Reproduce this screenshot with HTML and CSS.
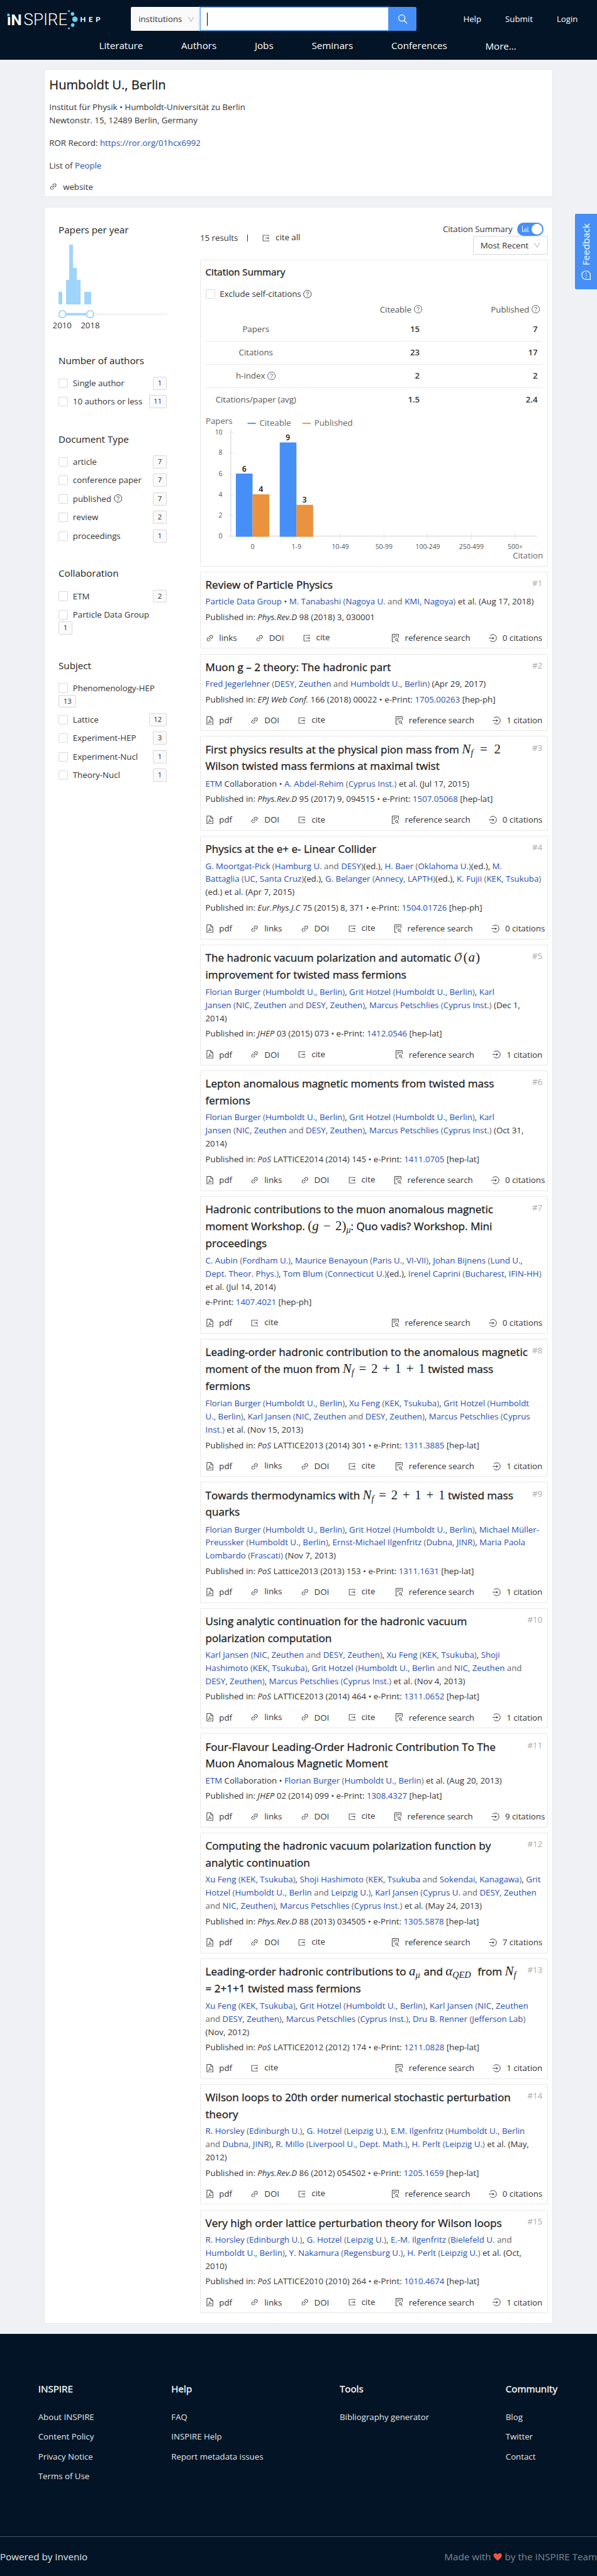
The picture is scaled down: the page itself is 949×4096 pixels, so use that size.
FILE: index.html
```html
<!DOCTYPE html>
<html lang="en">
<head>
<meta charset="utf-8">
<title>Humboldt U., Berlin - INSPIRE</title>
<link rel="stylesheet" href="styles.css">
</head>
<body>
<svg class="sprite" width="0" height="0">
  <symbol id="link" viewBox="0 0 1024 1024"><path fill="currentColor" d="M574 665.4a8.03 8.03 0 00-11.3 0L446.5 781.6c-53.8 53.8-144.6 59.5-204 0-59.5-59.5-53.8-150.2 0-204l116.2-116.2c3.1-3.1 3.1-8.2 0-11.3l-39.8-39.8a8.03 8.03 0 00-11.3 0L191.4 526.5c-84.6 84.6-84.6 221.5 0 306s221.5 84.6 306 0l116.2-116.2c3.1-3.1 3.1-8.2 0-11.3L574 665.4zm258.6-474c-84.6-84.6-221.5-84.6-306 0L410.3 307.6a8.03 8.03 0 000 11.3l39.7 39.7c3.1 3.1 8.2 3.1 11.3 0l116.2-116.2c53.8-53.8 144.6-59.5 204 0 59.5 59.5 53.8 150.2 0 204L665.3 562.6a8.03 8.03 0 000 11.3l39.8 39.8c3.1 3.1 8.2 3.1 11.3 0l116.2-116.2c84.5-84.6 84.5-221.5 0-306.1zM610.1 372.3a8.03 8.03 0 00-11.3 0L372.3 598.7a8.03 8.03 0 000 11.3l39.6 39.6c3.1 3.1 8.2 3.1 11.3 0l226.4-226.4c3.1-3.1 3.1-8.2 0-11.3l-39.5-39.6z"/></symbol>
  <symbol id="cite" viewBox="0 0 1024 1024"><path fill="currentColor" d="M888.3 757.4h-53.8c-4.2 0-7.7 3.5-7.7 7.7v61.8H197.1V197.1h629.8v61.8c0 4.2 3.5 7.7 7.7 7.7h53.8c4.2 0 7.7-3.4 7.7-7.7V158.7c0-17-13.7-30.7-30.7-30.7H158.7c-17 0-30.7 13.7-30.7 30.7v706.6c0 17 13.7 30.7 30.7 30.7h706.6c17 0 30.7-13.7 30.7-30.7V765.1c0-4.3-3.5-7.7-7.7-7.7zm18.6-251.7L765 393.7c-5.3-4.2-13-.4-13 6.3v76H438c-4.4 0-8 3.6-8 8v56c0 4.4 3.6 8 8 8h314v76c0 6.7 7.8 10.5 13 6.3l141.9-112a8 8 0 000-12.6z"/></symbol>
  <symbol id="pdf" viewBox="0 0 14 14"><path fill="none" stroke="currentColor" d="M2 .5h6.6L12 4v9.500H2zM8.400.700V4.200H11.800"/><path fill="none" stroke="currentColor" stroke-width=".8" d="M6.300 5.600c1 2.200 1.500 3.400 3.600 4.200-2-.5-4.200.2-6 1.400 2-1.300 2.900-3.600 2.400-5.600z"/></symbol>
  <symbol id="refs" viewBox="0 0 14 14"><path fill="none" stroke="currentColor" d="M5.500 13.400H1.500V.600H12V6.500M3.500 3.500H10M3.500 6H6.500"/><circle cx="9" cy="9.600" r="2" fill="none" stroke="currentColor"/><path stroke="currentColor" d="M10.400 11l2 2.400"/></symbol>
  <symbol id="cited" viewBox="0 0 14 14"><path fill="none" stroke="currentColor" d="M2.200 3.200a6 6 0 1 1 0 7.600"/><path fill="none" stroke="currentColor" d="M0 7H7"/><path fill="currentColor" d="M6.500 4.900L9.200 7 6.500 9.100z"/></symbol>
  <symbol id="help" viewBox="0 0 14 14"><circle cx="7" cy="7" r="6.400" fill="none" stroke="currentColor"/><path fill="none" stroke="currentColor" d="M5 5.600c0-2.500 4-2.500 4 0C9 7 7 6.900 7 8.500"/><circle cx="7" cy="10.200" r=".65" fill="currentColor"/></symbol>
  <symbol id="down" viewBox="0 0 12 12"><path fill="none" stroke="#b8b8b8" stroke-width="1.100" d="M1.500 2L6 9.500 10.500 2"/></symbol>
</svg>
<div class="page">
<header class="header">
  <div class="top">
    <svg class="logo" viewBox="0 0 180 64" width="180" height="64">
      <g fill="#fff">
        <text x="11.500" y="42.600" class="lg-b" textLength="25" lengthAdjust="spacingAndGlyphs">ıN</text>
        <text x="39.500" y="42.600" class="lg-l" textLength="73.500" lengthAdjust="spacingAndGlyphs">SPIRE</text>
        <text x="134" y="37" class="lg-h" textLength="34">HEP</text>
      </g>
      <g fill="#5fd0fa"><circle cx="14.200" cy="25" r="2.300"/><circle cx="115.500" cy="18.500" r="1.600"/><circle cx="121.500" cy="23.300" r="3"/><circle cx="125.500" cy="32.300" r="4.600"/><circle cx="121.800" cy="42" r="3"/><circle cx="115.500" cy="47.500" r="1.600"/></g>
    </svg>
    <div class="search">
      <div class="scope">institutions<svg width="12" height="12"><use href="#down"/></svg></div>
      <div class="field"><span class="caret"></span></div>
      <div class="go"><svg width="17" height="17" viewBox="0 0 17 17"><circle cx="7" cy="7" r="5.300" fill="none" stroke="#fff" stroke-width="1.300"/><path d="M11 11l4.800 5" stroke="#fff" stroke-width="1.500"/></svg></div>
    </div>
    <nav class="user"><span>Help</span><span>Submit</span><span>Login</span></nav>
  </div>
  <nav class="nav"><span>Literature</span><span>Authors</span><span>Jobs</span><span>Seminars</span><span>Conferences</span><span class="more">More...</span></nav>
</header>

<section class="panel inst">
  <h1>Humboldt U., Berlin</h1>
  <p class="addr">Institut für Physik • Humboldt-Universität zu Berlin<br>Newtonstr. 15, 12489 Berlin, Germany</p>
  <p>ROR Record: <a>https://ror.org/01hcx6992</a></p>
  <p>List of <a>People</a></p>
  <div class="act web"><svg><use href="#link"/></svg>website</div>
</section>

<section class="panel results">
  <aside class="side">
    <h3>Papers per year</h3>
    <div class="hist"><i style="height:21px"></i><i style="height:0"></i><i style="height:41px"></i><i style="height:100px"></i><i style="height:61px"></i><i style="height:41px"></i><i style="height:0"></i><i style="height:21px"></i><i style="height:21px"></i></div>
    <svg class="slider" width="184" height="16" viewBox="0 0 184 16"><rect y="6" width="183" height="4" rx="2" fill="#f5f5f5"/><rect x="6" y="6" width="47" height="4" fill="#9fd4fb"/><g fill="#fff" stroke="#9fd4fb" stroke-width="2"><circle cx="6.500" cy="8" r="6"/><circle cx="53" cy="8" r="6"/></g></svg>
    <div class="years"><span>2010</span><span>2018</span></div>
    <h3 class="first">Number of authors</h3>
    <div class="row"><i></i><span>Single author</span><b>1</b></div>
    <div class="row"><i></i><span>10 authors or less</span><b>11</b></div>
    <h3>Document Type</h3>
    <div class="row"><i></i><span>article</span><b>7</b></div>
    <div class="row"><i></i><span>conference paper</span><b>7</b></div>
    <div class="row"><i></i><span>published<svg class="q"><use href="#help"/></svg></span><b>7</b></div>
    <div class="row"><i></i><span>review</span><b>2</b></div>
    <div class="row"><i></i><span>proceedings</span><b>1</b></div>
    <h3>Collaboration</h3>
    <div class="row"><i></i><span>ETM</span><b>2</b></div>
    <div class="row long"><i></i><span>Particle Data Group</span><b>1</b></div>
    <h3>Subject</h3>
    <div class="row long"><i></i><span>Phenomenology-HEP</span><b>13</b></div>
    <div class="row"><i></i><span>Lattice</span><b>12</b></div>
    <div class="row"><i></i><span>Experiment-HEP</span><b>3</b></div>
    <div class="row"><i></i><span>Experiment-Nucl</span><b>1</b></div>
    <div class="row"><i></i><span>Theory-Nucl</span><b>1</b></div>
  </aside>

  <main class="main">
    <div class="bar">
      <div class="count"><span>15 results</span><em></em><div class="act"><svg><use href="#cite"/></svg><span class="up">cite all</span></div></div>
      <div class="opts">
        <div class="toggle">Citation Summary<span class="switch"><svg width="12" height="11" viewBox="0 0 12 11"><path fill="none" stroke="#fff" d="M.5 0V9.500H12M3.500 5.500V8M5.500 3.500V8M7.500 5V8M9.500 1.500V8"/></svg><i></i></span></div>
        <div class="sort">Most Recent<svg width="12" height="12"><use href="#down"/></svg></div>
      </div>
    </div>

    <article class="summary">
      <h2>Citation Summary</h2>
      <div class="row excl"><i></i><span>Exclude self-citations<svg class="q"><use href="#help"/></svg></span></div>
      <div class="tbl">
        <div class="tr th"><span></span><span>Citeable<svg class="q"><use href="#help"/></svg></span><span>Published<svg class="q"><use href="#help"/></svg></span></div>
        <div class="tr"><span>Papers</span><b>15</b><b>7</b></div>
        <div class="tr"><span>Citations</span><b>23</b><b>17</b></div>
        <div class="tr"><span>h-index<svg class="q"><use href="#help"/></svg></span><b>2</b><b>2</b></div>
        <div class="tr"><span>Citations/paper (avg)</span><b>1.5</b><b>2.4</b></div>
      </div>
      <svg class="chart" width="565" height="250" viewBox="344 694 565 250">
        <g class="c14"><text x="344" y="711">Papers</text><text x="434" y="714">Citeable</text><text x="526" y="714">Published</text><text x="909" y="936" text-anchor="end">Citation</text></g>
        <path stroke="#468ff7" stroke-width="2" d="M414 710h14"/><path stroke="#ea923d" stroke-width="2" d="M506 710h14"/>
        <path stroke="#e6e6e9" stroke-width="2" fill="none" d="M386 719V899"/>
        <path stroke="#e6e6e9" fill="none" d="M381 725h11M381 759.800h11M381 794.600h11M381 829.400h11M381 864.200h11M422.500 893v12M496 893v12M569.500 893v12M642.500 893v12M715.500 893v12M789 893v12M862.500 893v12"/>
        <path stroke="#e6e6e6" stroke-width="2" d="M381 899H899"/>
        <path fill="#468ff7" d="M394.500 794h28v106h-28zM468 742h28v158h-28z"/><path fill="#ea923d" d="M422.500 829h28v71h-28zM496 846.500h28v53.500h-28z"/>
        <g class="c11" text-anchor="end"><text x="372" y="729">10</text><text x="372" y="763">8</text><text x="372" y="798">6</text><text x="372" y="833">4</text><text x="372" y="868">2</text><text x="372" y="903">0</text></g>
        <g class="c11" text-anchor="middle"><text x="422.500" y="921">0</text><text x="496" y="921">1-9</text><text x="569.500" y="921">10-49</text><text x="642.500" y="921">50-99</text><text x="716" y="921">100-249</text><text x="789" y="921">250-499</text><text x="862.500" y="921">500+</text></g>
        <g class="cb" text-anchor="middle"><text x="408.500" y="791">6</text><text x="436.500" y="825">4</text><text x="481.500" y="738">9</text><text x="509.500" y="843">3</text></g>
      </svg>
    </article>

    <article class="paper"><div class="hd"><h2>Review of Particle Physics</h2><span>#1</span></div>
      <p class="au"><a>Particle Data Group</a> • <a>M. Tanabashi</a> <span>(<a>Nagoya U.</a> and <a>KMI, Nagoya</a>)</span> et al. (Aug 17, 2018)</p>
      <p class="pub">Published in: <em>Phys.Rev.D</em> 98 (2018) 3, 030001</p>
      <div class="acts"><div class="act"><svg><use href="#link"/></svg>links</div><div class="act"><svg><use href="#link"/></svg>DOI</div><div class="act"><svg><use href="#cite"/></svg><span class="up">cite</span></div><div class="act r"><svg><use href="#refs"/></svg>reference search</div><div class="act"><svg><use href="#cited"/></svg>0 citations</div></div></article>

    <article class="paper"><div class="hd"><h2>Muon g – 2 theory: The hadronic part</h2><span>#2</span></div>
      <p class="au"><a>Fred Jegerlehner</a> <span>(<a>DESY, Zeuthen</a> and <a>Humboldt U., Berlin</a>)</span> (Apr 29, 2017)</p>
      <p class="pub">Published in: <em>EPJ Web Conf.</em> 166 (2018) 00022 • e-Print: <a>1705.00263</a> [hep-ph]</p>
      <div class="acts"><div class="act"><svg><use href="#pdf"/></svg>pdf</div><div class="act"><svg><use href="#link"/></svg>DOI</div><div class="act"><svg><use href="#cite"/></svg><span class="up">cite</span></div><div class="act r"><svg><use href="#refs"/></svg>reference search</div><div class="act"><svg><use href="#cited"/></svg>1 citation</div></div></article>

    <article class="paper tex"><div class="hd"><h2>First physics results at the physical pion mass from <span class="m w65"><span><i>N</i><sub>f</sub></span><span>=</span><span>2</span></span><br>Wilson twisted mass fermions at maximal twist</h2><span>#3</span></div>
      <p class="au"><a>ETM</a> Collaboration • <a>A. Abdel-Rehim</a> <span>(<a>Cyprus Inst.</a>)</span> et al. (Jul 17, 2015)</p>
      <p class="pub">Published in: <em>Phys.Rev.D</em> 95 (2017) 9, 094515 • e-Print: <a>1507.05068</a> [hep-lat]</p>
      <div class="acts"><div class="act"><svg><use href="#pdf"/></svg>pdf</div><div class="act"><svg><use href="#link"/></svg>DOI</div><div class="act"><svg><use href="#cite"/></svg><span class="up">cite</span></div><div class="act r"><svg><use href="#refs"/></svg>reference search</div><div class="act"><svg><use href="#cited"/></svg>0 citations</div></div></article>

    <article class="paper"><div class="hd"><h2>Physics at the e+ e- Linear Collider</h2><span>#4</span></div>
      <p class="au"><a>G. Moortgat-Pick</a> <span>(<a>Hamburg U.</a> and <a>DESY</a>)</span>(ed.), <a>H. Baer</a> <span>(<a>Oklahoma U.</a>)</span>(ed.), <a>M.<br>Battaglia</a> <span>(<a>UC, Santa Cruz</a>)</span>(ed.), <a>G. Belanger</a> <span>(<a>Annecy, LAPTH</a>)</span>(ed.), <a>K. Fujii</a> <span>(<a>KEK, Tsukuba</a>)</span><br>(ed.) et al. (Apr 7, 2015)</p>
      <p class="pub">Published in: <em>Eur.Phys.J.C</em> 75 (2015) 8, 371 • e-Print: <a>1504.01726</a> [hep-ph]</p>
      <div class="acts"><div class="act"><svg><use href="#pdf"/></svg>pdf</div><div class="act"><svg><use href="#link"/></svg>links</div><div class="act"><svg><use href="#link"/></svg>DOI</div><div class="act"><svg><use href="#cite"/></svg><span class="up">cite</span></div><div class="act r"><svg><use href="#refs"/></svg>reference search</div><div class="act"><svg><use href="#cited"/></svg>0 citations</div></div></article>

    <article class="paper tex"><div class="hd"><h2>The hadronic vacuum polarization and automatic <span class="m w44"><span class="cal">𝒪</span><span>(</span><i>a</i><span>)</span></span><br>improvement for twisted mass fermions</h2><span>#5</span></div>
      <p class="au"><a>Florian Burger</a> <span>(<a>Humboldt U., Berlin</a>)</span>, <a>Grit Hotzel</a> <span>(<a>Humboldt U., Berlin</a>)</span>, <a>Karl<br>Jansen</a> <span>(<a>NIC, Zeuthen</a> and <a>DESY, Zeuthen</a>)</span>, <a>Marcus Petschlies</a> <span>(<a>Cyprus Inst.</a>)</span> (Dec 1,<br>2014)</p>
      <p class="pub">Published in: <em>JHEP</em> 03 (2015) 073 • e-Print: <a>1412.0546</a> [hep-lat]</p>
      <div class="acts"><div class="act"><svg><use href="#pdf"/></svg>pdf</div><div class="act"><svg><use href="#link"/></svg>DOI</div><div class="act"><svg><use href="#cite"/></svg><span class="up">cite</span></div><div class="act r"><svg><use href="#refs"/></svg>reference search</div><div class="act"><svg><use href="#cited"/></svg>1 citation</div></div></article>

    <article class="paper"><div class="hd"><h2>Lepton anomalous magnetic moments from twisted mass<br>fermions</h2><span>#6</span></div>
      <p class="au"><a>Florian Burger</a> <span>(<a>Humboldt U., Berlin</a>)</span>, <a>Grit Hotzel</a> <span>(<a>Humboldt U., Berlin</a>)</span>, <a>Karl<br>Jansen</a> <span>(<a>NIC, Zeuthen</a> and <a>DESY, Zeuthen</a>)</span>, <a>Marcus Petschlies</a> <span>(<a>Cyprus Inst.</a>)</span> (Oct 31,<br>2014)</p>
      <p class="pub">Published in: <em>PoS</em> LATTICE2014 (2014) 145 • e-Print: <a>1411.0705</a> [hep-lat]</p>
      <div class="acts"><div class="act"><svg><use href="#pdf"/></svg>pdf</div><div class="act"><svg><use href="#link"/></svg>links</div><div class="act"><svg><use href="#link"/></svg>DOI</div><div class="act"><svg><use href="#cite"/></svg><span class="up">cite</span></div><div class="act r"><svg><use href="#refs"/></svg>reference search</div><div class="act"><svg><use href="#cited"/></svg>0 citations</div></div></article>

    <article class="paper tex"><div class="hd"><h2>Hadronic contributions to the muon anomalous magnetic<br>moment Workshop. <span class="m w72"><span>(<i>g</i></span><span>−</span><span>2)<sub>μ</sub></span></span>: Quo vadis? Workshop. Mini<br>proceedings</h2><span>#7</span></div>
      <p class="au"><a>C. Aubin</a> <span>(<a>Fordham U.</a>)</span>, <a>Maurice Benayoun</a> <span>(<a>Paris U., VI-VII</a>)</span>, <a>Johan Bijnens</a> <span>(<a>Lund U.,<br>Dept. Theor. Phys.</a>)</span>, <a>Tom Blum</a> <span>(<a>Connecticut U.</a>)</span>(ed.), <a>Irenel Caprini</a> <span>(<a>Bucharest, IFIN-HH</a>)</span><br>et al. (Jul 14, 2014)</p>
      <p class="pub">e-Print: <a>1407.4021</a> [hep-ph]</p>
      <div class="acts"><div class="act"><svg><use href="#pdf"/></svg>pdf</div><div class="act"><svg><use href="#cite"/></svg><span class="up">cite</span></div><div class="act r"><svg><use href="#refs"/></svg>reference search</div><div class="act"><svg><use href="#cited"/></svg>0 citations</div></div></article>

    <article class="paper tex"><div class="hd"><h2>Leading-order hadronic contribution to the anomalous magnetic<br>moment of the muon from <span class="m w138"><span><i>N</i><sub>f</sub></span><span>=</span><span>2</span><span>+</span><span>1</span><span>+</span><span>1</span></span> twisted mass<br>fermions</h2><span>#8</span></div>
      <p class="au"><a>Florian Burger</a> <span>(<a>Humboldt U., Berlin</a>)</span>, <a>Xu Feng</a> <span>(<a>KEK, Tsukuba</a>)</span>, <a>Grit Hotzel</a> <span>(<a>Humboldt<br>U., Berlin</a>)</span>, <a>Karl Jansen</a> <span>(<a>NIC, Zeuthen</a> and <a>DESY, Zeuthen</a>)</span>, <a>Marcus Petschlies</a> <span>(<a>Cyprus<br>Inst.</a>)</span> et al. (Nov 15, 2013)</p>
      <p class="pub">Published in: <em>PoS</em> LATTICE2013 (2014) 301 • e-Print: <a>1311.3885</a> [hep-lat]</p>
      <div class="acts"><div class="act"><svg><use href="#pdf"/></svg>pdf</div><div class="act"><svg><use href="#link"/></svg><span class="up">links</span></div><div class="act"><svg><use href="#link"/></svg>DOI</div><div class="act"><svg><use href="#cite"/></svg><span class="up">cite</span></div><div class="act r"><svg><use href="#refs"/></svg>reference search</div><div class="act"><svg><use href="#cited"/></svg>1 citation</div></div></article>

    <article class="paper tex"><div class="hd"><h2>Towards thermodynamics with <span class="m w138"><span><i>N</i><sub>f</sub></span><span>=</span><span>2</span><span>+</span><span>1</span><span>+</span><span>1</span></span> twisted mass<br>quarks</h2><span>#9</span></div>
      <p class="au"><a>Florian Burger</a> <span>(<a>Humboldt U., Berlin</a>)</span>, <a>Grit Hotzel</a> <span>(<a>Humboldt U., Berlin</a>)</span>, <a>Michael Müller-<br>Preussker</a> <span>(<a>Humboldt U., Berlin</a>)</span>, <a>Ernst-Michael Ilgenfritz</a> <span>(<a>Dubna, JINR</a>)</span>, <a>Maria Paola<br>Lombardo</a> <span>(<a>Frascati</a>)</span> (Nov 7, 2013)</p>
      <p class="pub">Published in: <em>PoS</em> Lattice2013 (2013) 153 • e-Print: <a>1311.1631</a> [hep-lat]</p>
      <div class="acts"><div class="act"><svg><use href="#pdf"/></svg>pdf</div><div class="act"><svg><use href="#link"/></svg><span class="up">links</span></div><div class="act"><svg><use href="#link"/></svg>DOI</div><div class="act"><svg><use href="#cite"/></svg><span class="up">cite</span></div><div class="act r"><svg><use href="#refs"/></svg>reference search</div><div class="act"><svg><use href="#cited"/></svg>1 citation</div></div></article>

    <article class="paper"><div class="hd"><h2>Using analytic continuation for the hadronic vacuum<br>polarization computation</h2><span>#10</span></div>
      <p class="au"><a>Karl Jansen</a> <span>(<a>NIC, Zeuthen</a> and <a>DESY, Zeuthen</a>)</span>, <a>Xu Feng</a> <span>(<a>KEK, Tsukuba</a>)</span>, <a>Shoji<br>Hashimoto</a> <span>(<a>KEK, Tsukuba</a>)</span>, <a>Grit Hotzel</a> <span>(<a>Humboldt U., Berlin</a> and <a>NIC, Zeuthen</a> and<br><a>DESY, Zeuthen</a>)</span>, <a>Marcus Petschlies</a> <span>(<a>Cyprus Inst.</a>)</span> et al. (Nov 4, 2013)</p>
      <p class="pub">Published in: <em>PoS</em> LATTICE2013 (2014) 464 • e-Print: <a>1311.0652</a> [hep-lat]</p>
      <div class="acts"><div class="act"><svg><use href="#pdf"/></svg>pdf</div><div class="act"><svg><use href="#link"/></svg><span class="up">links</span></div><div class="act"><svg><use href="#link"/></svg>DOI</div><div class="act"><svg><use href="#cite"/></svg><span class="up">cite</span></div><div class="act r"><svg><use href="#refs"/></svg>reference search</div><div class="act"><svg><use href="#cited"/></svg>1 citation</div></div></article>

    <article class="paper"><div class="hd"><h2>Four-Flavour Leading-Order Hadronic Contribution To The<br>Muon Anomalous Magnetic Moment</h2><span>#11</span></div>
      <p class="au"><a>ETM</a> Collaboration • <a>Florian Burger</a> <span>(<a>Humboldt U., Berlin</a>)</span> et al. (Aug 20, 2013)</p>
      <p class="pub">Published in: <em>JHEP</em> 02 (2014) 099 • e-Print: <a>1308.4327</a> [hep-lat]</p>
      <div class="acts"><div class="act"><svg><use href="#pdf"/></svg>pdf</div><div class="act"><svg><use href="#link"/></svg>links</div><div class="act"><svg><use href="#link"/></svg>DOI</div><div class="act"><svg><use href="#cite"/></svg><span class="up">cite</span></div><div class="act r"><svg><use href="#refs"/></svg>reference search</div><div class="act"><svg><use href="#cited"/></svg>9 citations</div></div></article>

    <article class="paper"><div class="hd"><h2>Computing the hadronic vacuum polarization function by<br>analytic continuation</h2><span>#12</span></div>
      <p class="au"><a>Xu Feng</a> <span>(<a>KEK, Tsukuba</a>)</span>, <a>Shoji Hashimoto</a> <span>(<a>KEK, Tsukuba</a> and <a>Sokendai, Kanagawa</a>)</span>, <a>Grit<br>Hotzel</a> <span>(<a>Humboldt U., Berlin</a> and <a>Leipzig U.</a>)</span>, <a>Karl Jansen</a> <span>(<a>Cyprus U.</a> and <a>DESY, Zeuthen</a><br>and <a>NIC, Zeuthen</a>)</span>, <a>Marcus Petschlies</a> <span>(<a>Cyprus Inst.</a>)</span> et al. (May 24, 2013)</p>
      <p class="pub">Published in: <em>Phys.Rev.D</em> 88 (2013) 034505 • e-Print: <a>1305.5878</a> [hep-lat]</p>
      <div class="acts"><div class="act"><svg><use href="#pdf"/></svg>pdf</div><div class="act"><svg><use href="#link"/></svg>DOI</div><div class="act"><svg><use href="#cite"/></svg><span class="up">cite</span></div><div class="act r"><svg><use href="#refs"/></svg>reference search</div><div class="act"><svg><use href="#cited"/></svg>7 citations</div></div></article>

    <article class="paper tex"><div class="hd"><h2>Leading-order hadronic contributions to <span class="m w20"><span><i>a</i><sub>μ</sub></span></span> and <span class="m w49"><span><i>α</i><sub>QED</sub></span></span> from <span class="m w25"><span><i>N</i><sub>f</sub></span></span><br>= 2+1+1 twisted mass fermions</h2><span>#13</span></div>
      <p class="au"><a>Xu Feng</a> <span>(<a>KEK, Tsukuba</a>)</span>, <a>Grit Hotzel</a> <span>(<a>Humboldt U., Berlin</a>)</span>, <a>Karl Jansen</a> <span>(<a>NIC, Zeuthen</a><br>and <a>DESY, Zeuthen</a>)</span>, <a>Marcus Petschlies</a> <span>(<a>Cyprus Inst.</a>)</span>, <a>Dru B. Renner</a> <span>(<a>Jefferson Lab</a>)</span><br>(Nov, 2012)</p>
      <p class="pub">Published in: <em>PoS</em> LATTICE2012 (2012) 174 • e-Print: <a>1211.0828</a> [hep-lat]</p>
      <div class="acts"><div class="act"><svg><use href="#pdf"/></svg>pdf</div><div class="act"><svg><use href="#cite"/></svg><span class="up">cite</span></div><div class="act r"><svg><use href="#refs"/></svg>reference search</div><div class="act"><svg><use href="#cited"/></svg>1 citation</div></div></article>

    <article class="paper"><div class="hd"><h2>Wilson loops to 20th order numerical stochastic perturbation<br>theory</h2><span>#14</span></div>
      <p class="au"><a>R. Horsley</a> <span>(<a>Edinburgh U.</a>)</span>, <a>G. Hotzel</a> <span>(<a>Leipzig U.</a>)</span>, <a>E.M. Ilgenfritz</a> <span>(<a>Humboldt U., Berlin</a><br>and <a>Dubna, JINR</a>)</span>, <a>R. Millo</a> <span>(<a>Liverpool U., Dept. Math.</a>)</span>, <a>H. Perlt</a> <span>(<a>Leipzig U.</a>)</span> et al. (May,<br>2012)</p>
      <p class="pub">Published in: <em>Phys.Rev.D</em> 86 (2012) 054502 • e-Print: <a>1205.1659</a> [hep-lat]</p>
      <div class="acts"><div class="act"><svg><use href="#pdf"/></svg>pdf</div><div class="act"><svg><use href="#link"/></svg>DOI</div><div class="act"><svg><use href="#cite"/></svg><span class="up">cite</span></div><div class="act r"><svg><use href="#refs"/></svg>reference search</div><div class="act"><svg><use href="#cited"/></svg>0 citations</div></div></article>

    <article class="paper"><div class="hd"><h2>Very high order lattice perturbation theory for Wilson loops</h2><span>#15</span></div>
      <p class="au"><a>R. Horsley</a> <span>(<a>Edinburgh U.</a>)</span>, <a>G. Hotzel</a> <span>(<a>Leipzig U.</a>)</span>, <a>E.-M. Ilgenfritz</a> <span>(<a>Bielefeld U.</a> and<br><a>Humboldt U., Berlin</a>)</span>, <a>Y. Nakamura</a> <span>(<a>Regensburg U.</a>)</span>, <a>H. Perlt</a> <span>(<a>Leipzig U.</a>)</span> et al. (Oct,<br>2010)</p>
      <p class="pub">Published in: <em>PoS</em> LATTICE2010 (2010) 264 • e-Print: <a>1010.4674</a> [hep-lat]</p>
      <div class="acts"><div class="act"><svg><use href="#pdf"/></svg>pdf</div><div class="act"><svg><use href="#link"/></svg>links</div><div class="act"><svg><use href="#link"/></svg>DOI</div><div class="act"><svg><use href="#cite"/></svg><span class="up">cite</span></div><div class="act r"><svg><use href="#refs"/></svg>reference search</div><div class="act"><svg><use href="#cited"/></svg>1 citation</div></div></article>
  </main>
</section>

<footer class="footer">
  <div class="cols">
    <div><h4>INSPIRE</h4><p>About INSPIRE</p><p>Content Policy</p><p>Privacy Notice</p><p>Terms of Use</p></div>
    <div><h4>Help</h4><p>FAQ</p><p>INSPIRE Help</p><p>Report metadata issues</p></div>
    <div><h4>Tools</h4><p>Bibliography generator</p></div>
    <div><h4>Community</h4><p>Blog</p><p>Twitter</p><p>Contact</p></div>
  </div>
  <div class="legal"><span>Powered by Invenio</span><span class="made">Made with <svg width="15" height="14" viewBox="0 0 15 14"><path fill="#ea5546" d="M7.500 13.300C3 9.500.500 7.500.500 4.300.500 2 2.100.700 4 .700c1.500 0 2.800.800 3.500 2.100C8.200 1.500 9.500.700 11 .700c1.900 0 3.500 1.300 3.500 3.600 0 3.200-2.500 5.200-7 9z"/></svg> by the INSPIRE Team</span></div>
</footer>

<div class="feedback"><svg width="16" height="16" viewBox="0 0 16 16"><path fill="none" stroke="#fff" stroke-width="1.200" d="M15.200 8A7.200 7.200 0 1 0 8 15.200H15.200z"/><path stroke="#fff" stroke-width="1.500" d="M7.300 4.500h1.500M7.300 8h1.500M7.300 11.500h1.500"/></svg><span>Feedback</span></div>
</div>
</body>
</html>
```
FILE: styles.css
```css
* { box-sizing: border-box; margin: 0; padding: 0; }
body { overflow-x: hidden; background: #eff1f5; }
.sprite { display: block; height: 0; }
.page {
  zoom: 0.949;
  position: relative;
  width: 1000px;
  height: 4316px;
  overflow: hidden;
  background: #eff1f5;
  font: 14px/22px "Open Sans", "Noto Sans", sans-serif;
  color: #333;
  white-space: nowrap;
}
a { color: #1f50b3; }
svg { flex: none; }

/* header */
.header { height: 100px; background: #021425; color: #fff; }
.top { display: flex; height: 64px; align-items: center; }
.logo { margin-right: 39px; }
.lg-b { font: 700 26px "Roboto", sans-serif; }
.lg-l { font: 300 27px "Roboto", sans-serif; }
.lg-h { font: 700 12.500px "Lato", sans-serif; }
.search { display: flex; width: 479px; height: 40px; }
.scope { display: flex; align-items: center; gap: 9px; width: 116px; padding-left: 13px; background: #fafafa; color: #333; border-radius: 2px 0 0 2px; }
.field { flex: 1; display: flex; align-items: center; padding-left: 11px; background: #fff; border: 1px solid #5b9df8; box-shadow: 0 0 0 2px rgba(70, 143, 247, .25); }
.caret { width: 1px; height: 22px; background: #000; }
.go { display: flex; align-items: center; justify-content: center; width: 47px; background: #468ff7; border-radius: 0 2px 2px 0; }
.user { display: flex; gap: 40px; margin-left: 78px; }
.nav { display: flex; gap: 64px; padding-left: 166px; font-size: 16px; line-height: 24px; }
.more { padding-top: 1px; }

/* panels */
.panel { width: 853px; margin: 0 auto; background: #fff; border: 1px solid #e8e8e8; }
.inst { height: 214px; margin-top: 16px; padding: 9px 8px; }
.inst h1 { font-size: 21.200px; line-height: 32px; font-weight: 400; -webkit-text-stroke: .3px; color: #1c1c1c; margin-bottom: 11px; }
.inst p { margin-bottom: 16px; }
.act { display: flex; align-items: center; gap: 9px; }
.act svg { width: 14px; height: 14px; }
.web { margin-top: -3px; }
.results { display: flex; height: 3547px; margin-top: 17px; padding: 25px 0 0 23.500px; }

/* facets */
.side { flex: none; width: 181px; margin-right: 56px; }
.side h3 { font-size: 16px; line-height: 24px; font-weight: 400; color: #1c1c1c; margin: 40px 0 15px; }
.side h3:first-child { margin: 0 0 13px; }
.side h3.first { margin-top: 36px; }
.hist { display: flex; align-items: flex-end; height: 100px; }
.hist i { width: 6.100px; background: #9fd4fb; }
.slider { display: block; margin-top: 8px; }
.years { display: flex; gap: 15px; margin: 0 0 0 -10px; }
.row { display: flex; align-items: center; height: 22px; margin-bottom: 9px; }
.row i { width: 16px; height: 16px; margin-right: 8px; background: #fff; border: 1px solid #d9d9d9; border-radius: 2px; }
.row b { margin-left: auto; padding: 0 7px; height: 22px; background: #fafafa; border: 1px solid #d9d9d9; border-radius: 2px; font-weight: 400; font-size: 12px; line-height: 20px; }
.long { flex-wrap: wrap; height: 44px; }
.long b { margin: 0 140px 0 0; }
.q { width: 14px; height: 14px; margin-left: 4px; vertical-align: -2px; }

/* result bar */
.main { flex: none; width: 582.500px; }
.bar { display: flex; justify-content: space-between; height: 62px; }
.count { display: flex; align-items: center; height: 52px; }
.count em { width: 1px; height: 12px; margin: 0 24px 0 15px; background: #333; }
.opts { display: flex; flex-direction: column; align-items: flex-end; }
.toggle { display: flex; gap: 8px; margin-right: 7px; }
.switch { display: flex; align-items: center; justify-content: space-between; width: 44px; height: 22px; padding: 0 2px 0 8px; border-radius: 11px; background: #468ff7; }
.switch i { width: 18px; height: 18px; border-radius: 50%; background: #fff; }
.sort { display: flex; align-items: center; gap: 8px; height: 32px; padding: 0 11px; border: 1px solid #d9d9d9; border-radius: 2px; }

/* citation summary */
.summary { height: 514px; padding: 8px; border: 1px solid #e8e8e8; border-radius: 2px; margin-bottom: 8.500px; }
.summary h2 { font-size: 16px; line-height: 25px; font-weight: 400; -webkit-text-stroke: .35px; color: #1c1c1c; }
.excl { margin: 13px 0 0; height: 22px; }
.tbl { color: #555; }
.tr { display: grid; grid-template-columns: 169px 190px 1fr; align-items: center; height: 39px; padding-right: 8px; text-align: right; border-bottom: 1px solid #e8e8e8; }
.tr > span:first-child { text-align: center; }
.tr:last-child { border: 0; }
.tr b { font-weight: 600; color: #333; }
.th { height: 29px; border: 0; padding-right: 4px; }
.th span:nth-child(2) { margin-right: -4px; }
.chart { display: block; margin-top: 4px; }
.c14 { font-size: 14px; fill: #666; }
.c11 { font-size: 11px; fill: #555; }
.cb { font-size: 13px; font-weight: 600; fill: #111; }

/* papers */
.paper { border: 1px solid #e8e8e8; border-radius: 2px; padding: 7.500px 8px 6px; margin-bottom: 8.600px; }
.hd { display: flex; justify-content: space-between; }
.hd h2 { font-size: 18px; line-height: 28.300px; font-weight: 400; -webkit-text-stroke: .35px; color: #1c1c1c; }
.tex .hd { padding-bottom: 1px; }
.hd > span { color: #aaa; }
.au { margin-top: 2.500px; }
.au span { color: #666; }
.pub { margin-top: 4px; }
.acts { display: flex; gap: 31px; margin-top: 13px; }
.acts .r { margin-left: auto; }
.up { margin-top: -2px; }
.m { display: inline-flex; align-items: baseline; justify-content: space-between; height: 22px; line-height: 22px; font-family: "Liberation Serif", serif; font-size: 22px; -webkit-text-stroke: 0; }
.m sub { font-size: 15px; font-style: italic; line-height: 0; vertical-align: -4px; }
.cal { font-family: "DejaVu Math TeX Gyre", "DejaVu Serif", serif; font-size: 19px; }
.w65 { width: 65px; }
.w44 { width: 44px; }
.w72 { width: 72px; }
.w138 { width: 138px; }
.w20 { width: 20px; }
.w49 { width: 49px; }
.w25 { width: 25px; }

/* footer */
.footer { height: 406px; margin-top: 17px; background: #021425; color: #e4e6e8; }
.cols { display: grid; grid-template-columns: 223px 282px 278px 1fr; height: 340px; padding: 80px 0 0 64px; border-bottom: 1px solid #465361; }
.cols h4 { font-size: 16px; line-height: 24px; font-weight: 400; -webkit-text-stroke: .35px; color: #fff; margin-bottom: 24px; }
.cols p { margin-bottom: 11px; }
.legal { display: flex; justify-content: space-between; padding-top: 20px; font-size: 16px; line-height: 26px; }
.made { color: #808890; }
.made svg { vertical-align: -1px; }

/* feedback tab over the page edge */
.feedback { position: absolute; top: 358px; right: 0; display: flex; flex-direction: column-reverse; align-items: center; justify-content: space-between; width: 37px; height: 127px; padding: 16px 0; background: #468ff7; border-radius: 2px 0 0 2px; color: #fff; font-size: 16px; }
.feedback span { writing-mode: vertical-rl; transform: rotate(180deg); line-height: 22px; }
```
